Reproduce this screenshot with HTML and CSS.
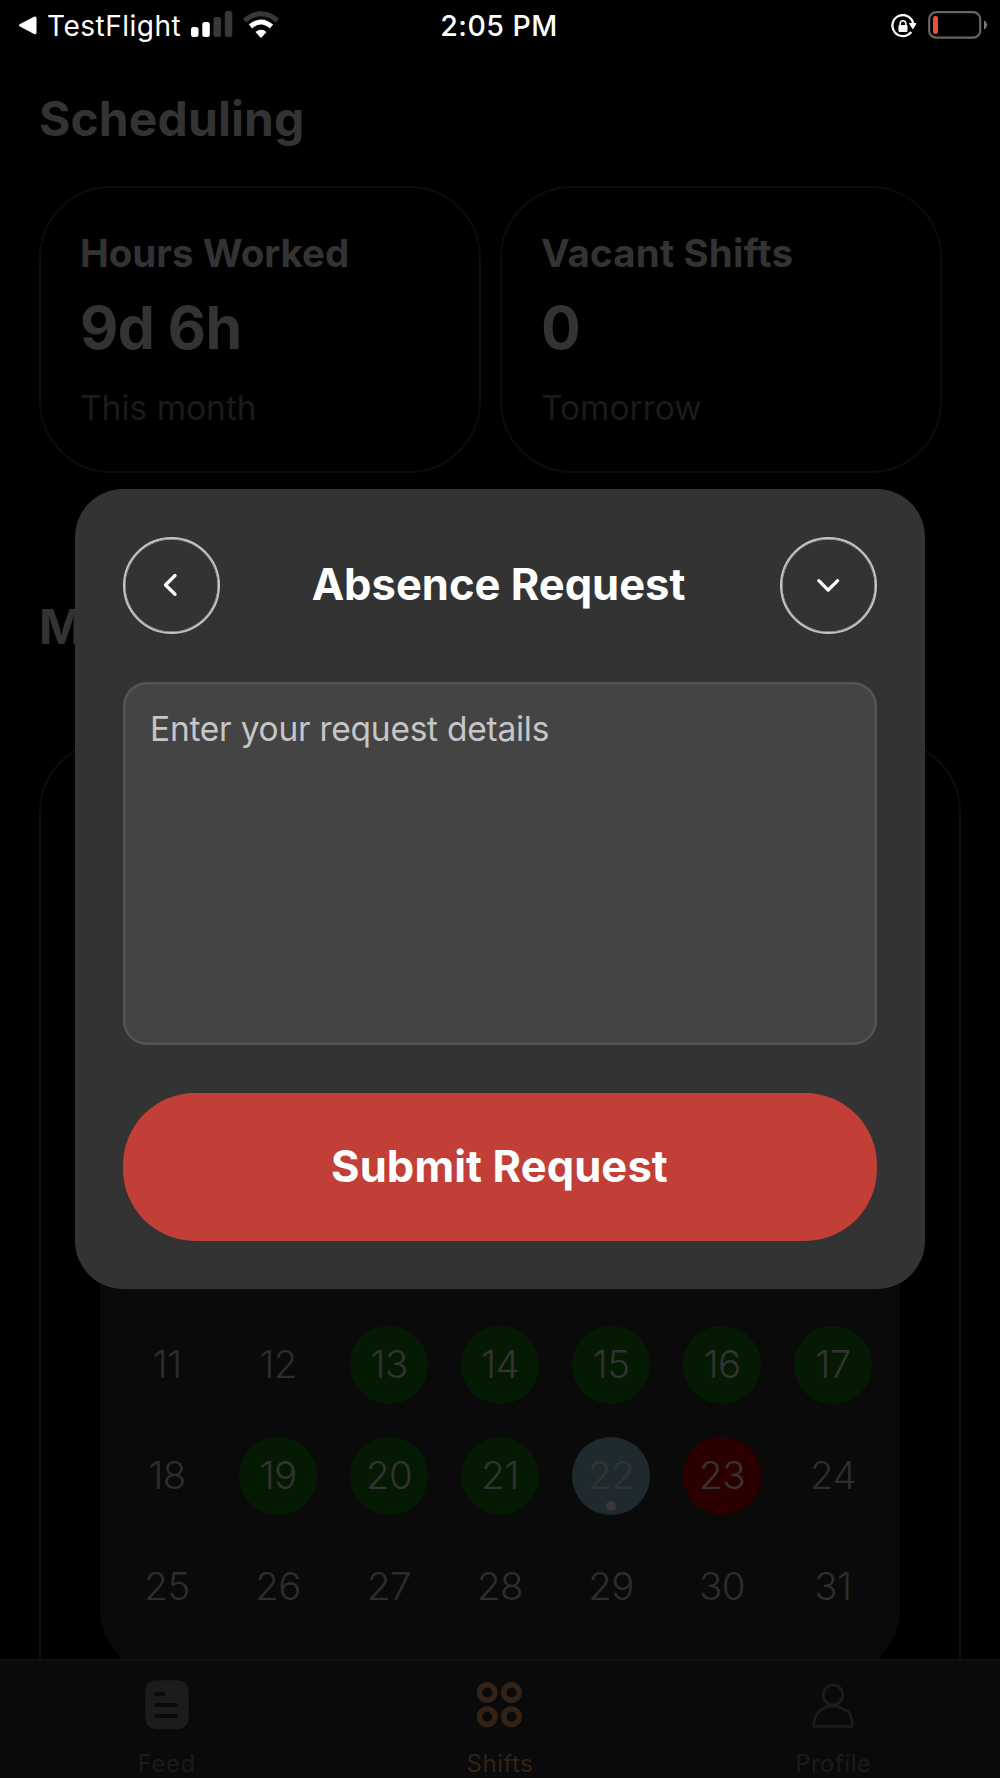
FILE: index.html
```html
<!DOCTYPE html>
<html lang="en">
<head>
    <meta charset="UTF-8">
    <meta name="viewport" content="width=device-width, initial-scale=1.0">
    <title>Scheduling</title>
    <link rel="stylesheet" href="styles.css">
</head>
<body>
    <div class="screen">
        <!-- Status bar -->
        <header class="status-bar">
            <div class="status-left">
                <svg class="back-arrow" width="19" height="19" viewBox="0 0 19 19"><path d="M1.5 8.3 L16 .8 Q18.5 0 18.5 2.5 V16.5 Q18.5 19 16 18 L1.5 10.3 Q0 9.3 1.5 8.3Z" fill="#fff"/></svg>
                <span class="back-app">TestFlight</span>
                <svg class="signal" width="42" height="27" viewBox="0 0 42 27">
                    <rect x="0" y="16" width="7.5" height="10" rx="2.5" fill="#fff"/>
                    <rect x="11.3" y="11" width="7.5" height="15" rx="2.5" fill="#fff"/>
                    <rect x="22.5" y="6" width="7.5" height="20" rx="2.5" fill="#383838"/>
                    <rect x="33.8" y="0" width="7.5" height="26" rx="2.5" fill="#383838"/>
                </svg>
                <svg class="wifi" width="38" height="27" viewBox="0 0 38 27">
                    <path d="M2.5 9.5 Q19 -4 35.5 9.5" fill="none" stroke="#383838" stroke-width="5"/>
                    <path d="M8.5 15.5 Q19 6.5 29.5 15.5" fill="none" stroke="#fff" stroke-width="5"/>
                    <path d="M13.5 21 Q19 16.5 24.5 21 L20 26 Q19 27 18 26Z" fill="#fff"/>
                </svg>
            </div>
            <div class="status-time">2:05 PM</div>
            <div class="status-right">
                <svg width="26" height="24" viewBox="0 0 26 24">
                    <path d="M20.2 18 A10.5 10.5 0 1 1 22.2 9.5" fill="none" stroke="#fff" stroke-width="2.3"/>
                    <path d="M18.5 9.5 H25 L21.9 14.8Z" fill="#fff" stroke="#fff" stroke-linejoin="round"/>
                    <rect x="7.5" y="11" width="9" height="7" rx="1" fill="#fff"/>
                    <path d="M9.2 11.5 V9.5 A2.8 2.8 0 0 1 14.8 9.5 V11.5" fill="none" stroke="#fff" stroke-width="1.6"/>
                </svg>
                <svg class="battery" width="60" height="28" viewBox="0 0 60 28">
                    <rect x="1.2" y="1.2" width="51" height="25.5" rx="7" fill="none" stroke="#666" stroke-width="2.2"/>
                    <rect x="5" y="5" width="5" height="18" rx="2.2" fill="#eb4f3d"/>
                    <path d="M56 9.5 Q59 11 59 14 Q59 17 56 18.5Z" fill="#777"/>
                </svg>
            </div>
        </header>

        <main class="content">
            <h1>Scheduling</h1>
            <div class="stats">
                <div class="stat-card">
                    <h3>Hours Worked</h3>
                    <div class="stat-value">9d 6h</div>
                    <div class="stat-label">This month</div>
                </div>
                <div class="stat-card">
                    <h3 class="vacant">Vacant Shifts</h3>
                    <div class="stat-value">0</div>
                    <div class="stat-label">Tomorrow</div>
                </div>
            </div>

            <h2>M</h2>
            <div class="schedule-card">
                <div class="calendar">
                    <span class="day">11</span>
                    <span class="day">12</span>
                    <span class="day worked">13</span>
                    <span class="day worked">14</span>
                    <span class="day worked">15</span>
                    <span class="day worked">16</span>
                    <span class="day worked">17</span>
                    <span class="day">18</span>
                    <span class="day worked">19</span>
                    <span class="day worked">20</span>
                    <span class="day worked">21</span>
                    <span class="day today">22</span>
                    <span class="day absent">23</span>
                    <span class="day">24</span>
                    <span class="day">25</span>
                    <span class="day">26</span>
                    <span class="day">27</span>
                    <span class="day">28</span>
                    <span class="day">29</span>
                    <span class="day">30</span>
                    <span class="day">31</span>
                </div>
            </div>
        </main>

        <!-- Bottom tabs -->
        <nav class="tab-bar">
            <a class="tab">
                <svg width="50" height="50" viewBox="0 0 50 50">
                    <rect x="3.3" y=".2" width="43.4" height="49" rx="10.5" fill="#1c1c1c"/>
                    <path d="M14 14 H21.5 M14 25 H34 M14 36 H34" stroke="#0a0a0a" stroke-width="3.8" stroke-linecap="round"/>
                </svg>
                <span>Feed</span>
            </a>
            <a class="tab active">
                <svg width="50" height="50" viewBox="0 0 50 50" fill="none" stroke="#332317" stroke-width="5.5">
                    <circle cx="12.2" cy="12.5" r="7.8"/>
                    <circle cx="36.5" cy="12.5" r="7.8"/>
                    <circle cx="12.2" cy="36.8" r="7.8"/>
                    <circle cx="36.5" cy="36.8" r="7.8"/>
                </svg>
                <span>Shifts</span>
            </a>
            <a class="tab">
                <svg width="50" height="50" viewBox="0 0 50 50" fill="none" stroke="#1c1c1c" stroke-width="2.7" stroke-linejoin="round">
                    <circle cx="25" cy="15" r="9.8"/>
                    <path d="M5.7 46.5 C5.5 34.5 13 26.2 25 26.2 C29.5 26.2 34 28 37 30.5 H39 C42.5 33.5 44.5 39 44.3 46.5Z"/>
                </svg>
                <span>Profile</span>
            </a>
        </nav>

        <!-- Absence request dialog -->
        <div class="overlay">
            <div class="modal">
                <div class="modal-header">
                    <button class="round-btn" aria-label="Back">
                        <svg width="24" height="24" viewBox="0 0 24 24"><path d="M16 2.500 L6.500 12 L16 21.300"/></svg>
                    </button>
                    <div class="modal-title">Absence Request</div>
                    <button class="round-btn" aria-label="Close">
                        <svg width="24" height="24" viewBox="0 0 24 24"><path d="M2.800 7.700 L12.200 17.200 L21.600 7.700"/></svg>
                    </button>
                </div>
                <textarea class="details" placeholder="Enter your request details"></textarea>
                <button class="submit-btn">Submit Request</button>
            </div>
        </div>
    </div>
</body>
</html>
```
FILE: styles.css
```css
* {
    box-sizing: border-box;
}
body {
    margin: 0;
    background-color: #000;
    font-family: Inter, "Liberation Sans", sans-serif;
    color: #333;
}
h1, h2, h3 {
    margin: 0;
    font-weight: 700;
}
.screen {
    position: relative;
    width: 1000px;
    height: 1778px;
    overflow: hidden;
    background-color: #000;
}

/* status bar */
.status-bar {
    display: grid;
    grid-template-columns: 1fr auto 1fr;
    align-items: center;
    height: 51px;
    padding: 0 12px 0 18px;
    color: #fff;
    font-size: 28px;
}
.status-left, .status-right {
    display: flex;
    align-items: center;
}
.status-right {
    justify-content: flex-end;
    gap: 11px;
}
.back-app {
    margin-left: 10px;
    letter-spacing: 0.5px;
}
.signal {
    margin: 0 9px 2px 10px;
}
.wifi {
    margin-bottom: 3px;
}
.battery {
    margin-bottom: 2px;
}
.status-time {
    margin-right: 8px;
    font-size: 28.5px;
    font-weight: 500;
    letter-spacing: 0.5px;
}

/* page */
.content {
    padding: 38.5px 39px 0;
}
h1, h2 {
    font-size: 48px;
    line-height: 58px;
    letter-spacing: 0.1px;
}
.stats {
    display: grid;
    grid-template-columns: 441.5px 441.5px;
    gap: 19.5px;
    margin-top: 38.5px;
}
.stat-card {
    height: 287px;
    padding: 42px 39px;
    border: 2px solid #0c0c0c;
    border-radius: 72px;
}
.stat-card h3 {
    font-size: 38.5px;
    line-height: 46px;
}
.stat-card .vacant {
    letter-spacing: 0.15px;
}
.stat-value {
    margin-top: 17px;
    font-size: 59px;
    font-weight: 700;
    line-height: 70px;
    letter-spacing: -0.6px;
}
.stat-label {
    margin-top: 25px;
    font-size: 33.5px;
    line-height: 40px;
    color: #1b1b1b;
}
h2 {
    margin-top: 124.5px;
}
.schedule-card {
    height: 1100px;
    margin-top: 84.5px;
    padding: 59px;
    border: 2px solid #0c0c0c;
    border-radius: 72px;
}
.calendar {
    display: grid;
    grid-template-columns: repeat(7, 1fr);
    grid-auto-rows: 111px;
    place-items: center;
    padding: 508.5px 11.5px 36.5px;
    border-radius: 72px;
    background-color: #0a0a0a;
}
.day {
    position: relative;
    width: 77.5px;
    height: 77.5px;
    border-radius: 50%;
    font-size: 38.5px;
    font-weight: 300;
    line-height: 77.5px;
    text-align: center;
    letter-spacing: -0.6px;
    color: #2d2d2d;
}
.worked {
    background-color: #051a02;
    color: #333;
}
.absent {
    background-color: #2d0000;
    color: #383333;
}
.today {
    background-color: #1f2a2e;
    color: #333;
}
.today::after {
    content: "";
    position: absolute;
    bottom: 4px;
    left: 34px;
    width: 10px;
    height: 10px;
    border-radius: 50%;
    background-color: #383838;
}

/* tabs */
.tab-bar {
    position: absolute;
    bottom: 0;
    left: 0;
    display: grid;
    grid-template-columns: repeat(3, 1fr);
    width: 100%;
    height: 119px;
    padding-top: 18.5px;
    border-top: 2px solid #121212;
    background-color: #0a0a0a;
}
.tab {
    display: flex;
    flex-direction: column;
    align-items: center;
    gap: 19px;
    font-size: 24px;
    line-height: 30px;
    letter-spacing: 0.5px;
    color: #1b1b1b;
}
.active {
    color: #332317;
}

/* dialog */
.overlay {
    position: absolute;
    inset: 0;
    display: flex;
    align-items: center;
    justify-content: center;
}
.modal {
    display: flex;
    flex-direction: column;
    gap: 48px;
    width: 850px;
    height: 800px;
    padding: 48px;
    border-radius: 48px;
    background-color: #333;
}
.modal-header {
    display: flex;
    align-items: center;
    justify-content: space-between;
}
.modal-title {
    padding: 0 3px 3px 0;
    font-size: 43.5px;
    font-weight: 700;
    color: #fff;
}
.round-btn {
    display: flex;
    align-items: center;
    justify-content: center;
    width: 97px;
    height: 97px;
    padding: 0 1px 1px 0;
    border: 2px solid #c4c4c4;
    border-radius: 50%;
    background: none;
    box-shadow: inset 0 0 0 0.5px #c4c4c4;
}
.round-btn path {
    fill: none;
    stroke: #fff;
    stroke-width: 3.3;
    stroke-linecap: round;
    stroke-linejoin: round;
}
.details {
    flex: 1;
    padding: 25px;
    border: 2px solid #555;
    border-radius: 24px;
    background-color: #444;
    box-shadow: inset 0 0 0 0.5px #555;
    font-family: inherit;
    font-size: 33.5px;
    line-height: 40px;
    letter-spacing: -0.25px;
    color: #fff;
    resize: none;
}
.details::placeholder {
    color: #c6c6c6;
}
.submit-btn {
    height: 148.5px;
    padding: 0 1px 2px 0;
    border: none;
    border-radius: 72px;
    background-color: #c23f37;
    font-family: inherit;
    font-size: 43.5px;
    font-weight: 700;
    letter-spacing: 0.1px;
    color: #fff;
}
```
